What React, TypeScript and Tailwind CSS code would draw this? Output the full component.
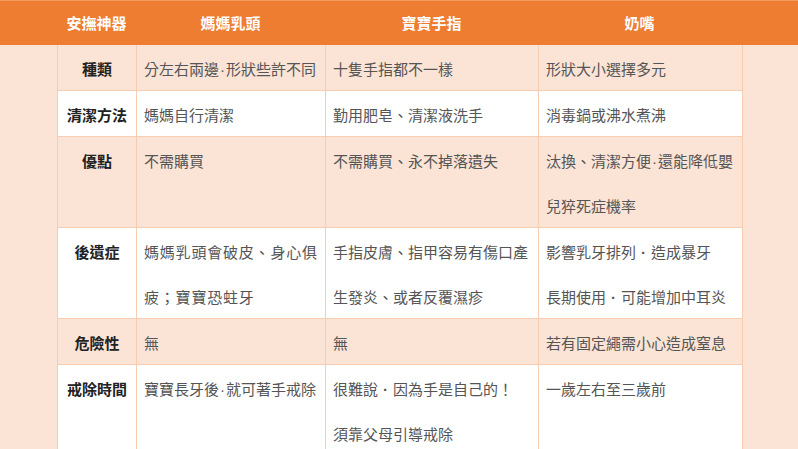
import React from "react";

type Row = { label: string; peach: boolean; cells: string[][]; wide?: number[] };

const rows: Row[] = [
  { label: "種類", peach: true, cells: [["分左右兩邊·形狀些許不同"], ["十隻手指都不一樣"], ["形狀大小選擇多元"]] },
  { label: "清潔方法", peach: false, cells: [["媽媽自行清潔"], ["勤用肥皂、清潔液洗手"], ["消毒鍋或沸水煮沸"]] },
  { label: "優點", peach: true, cells: [["不需購買"], ["不需購買、永不掉落遺失"], ["汰換、清潔方便·還能降低嬰", "兒猝死症機率"]] },
  {
    label: "後遺症",
    peach: false,
    cells: [
      ["媽媽乳頭會破皮、身心俱", "疲；寶寶恐蛀牙"],
      ["手指皮膚、指甲容易有傷口產", "生發炎、或者反覆濕疹"],
      ["影響乳牙排列，造成暴牙", "長期使用，可能增加中耳炎"],
    ],
    wide: [0],
  },
  { label: "危險性", peach: true, cells: [["無"], ["無"], ["若有固定繩需小心造成窒息"]] },
  { label: "戒除時間", peach: false, cells: [["寶寶長牙後·就可著手戒除"], ["很難說，因為手是自己的！", "須靠父母引導戒除"], ["一歲左右至三歲前"]] },
];

const font = { fontFamily: '"Noto Sans CJK TC", "Noto Sans", sans-serif' };

function renderLine(l: string) {
  const parts: React.ReactNode[] = [];
  let buf = "";
  let key = 0;
  for (const ch of l) {
    if (ch === "·") {
      if (buf) parts.push(buf);
      buf = "";
      parts.push(
        <span key={key++} className="font-['Liberation_Sans'] leading-none px-[1px]">
          ·
        </span>
      );
    } else if (ch === "，") {
      if (buf) parts.push(buf);
      buf = "";
      parts.push(
        <span key={key++} className="inline-block w-[15px] text-center font-['Liberation_Sans'] font-bold leading-none">
          ·
        </span>
      );
    } else {
      buf += ch;
    }
  }
  if (buf) parts.push(buf);
  return parts;
}

export default function App() {
  return (
    <div className="min-h-screen w-[798px] h-[449px] overflow-hidden bg-[#fbe4d6]" style={font}>
      <div className="h-[45px] w-full bg-[#ee7c31] border-t border-[#f29a5e]">
        <div className="ml-[57px] grid grid-cols-[79px_189px_213px_203px] h-[44px] items-center text-[15px] font-bold text-white">
          <div className="text-center">安撫神器</div>
          <div className="text-center">媽媽乳頭</div>
          <div className="text-center">寶寶手指</div>
          <div className="text-center">奶嘴</div>
        </div>
      </div>
      <table className="ml-[57px] w-[685px] border-collapse table-fixed">
        <colgroup>
          <col className="w-[79px]" />
          <col className="w-[189px]" />
          <col className="w-[213px]" />
          <col className="w-[204px]" />
        </colgroup>
        <tbody>
          {rows.map((r, i) => (
            <tr key={i} className={r.peach ? "bg-[#fbe4d6]" : "bg-white"}>
              <td className="border border-t-0 border-[#f7cdb2] align-top text-center text-[15px] font-bold text-[#222] whitespace-nowrap">
                <div className="h-[45px] leading-[48px]">{r.label}</div>
              </td>
              {r.cells.map((lines, j) => (
                <td
                  key={j}
                  className={
                    "border border-t-0 border-[#f7cdb2] align-top pl-[7px] text-[15px] text-[#555] whitespace-nowrap " +
                    (r.wide && r.wide.includes(j) ? "tracking-[0.8px]" : "")
                  }
                >
                  {lines.map((l, k) => (
                    <div key={k} className="h-[45px] leading-[48px]">
                      {renderLine(l)}
                    </div>
                  ))}
                </td>
              ))}
            </tr>
          ))}
        </tbody>
      </table>
    </div>
  );
}
